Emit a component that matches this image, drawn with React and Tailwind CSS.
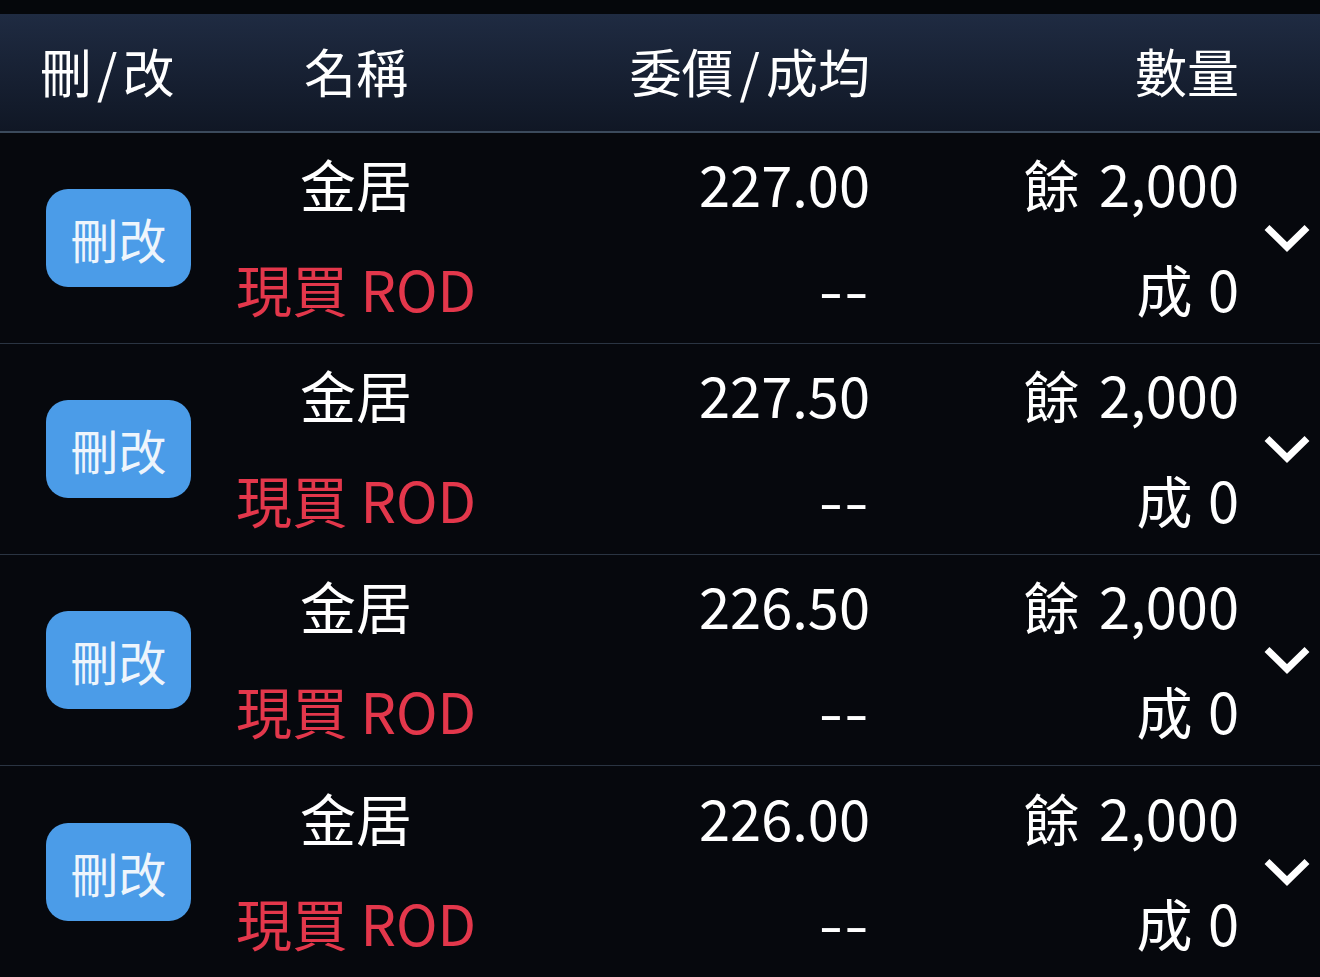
import React from "react";

const rows = [
  { price: "227.00" },
  { price: "227.50" },
  { price: "226.50" },
  { price: "226.00" },
];

function Chevron() {
  return (
    <svg width="48" height="30" viewBox="0 0 48 30" fill="none">
      <polyline points="4,4.5 24,24 44,4.5" stroke="#ffffff" strokeWidth="7" strokeLinecap="butt" strokeLinejoin="miter" />
    </svg>
  );
}

function Row({ price, last }) {
  return (
    <div className={`flex items-center h-[211px] ${last ? "" : "border-b border-[#2a3442]"}`}>
      <div className="w-[240px] pl-[46px] flex items-center">
        <div className="w-[145px] h-[98px] rounded-[22px] bg-[#4b9ce8] flex items-center justify-center text-[48px] text-[#eef5fc] leading-none">
          刪改
        </div>
      </div>
      <div className="w-[232px] pb-[6px] flex flex-col items-center leading-[105px] text-[56px]">
        <div className="text-white">金居</div>
        <div className="text-[#e3374b] whitespace-nowrap">現買 ROD</div>
      </div>
      <div className="w-[398px] pb-[6px] flex flex-col items-end leading-[105px] text-[56px] text-white">
        <div>{price}</div>
        <div className="inline-block origin-right scale-x-125 tracking-[1px]">--</div>
      </div>
      <div className="w-[369px] pb-[6px] flex flex-col items-end leading-[105px] text-[56px] text-white">
        <div className="whitespace-nowrap [word-spacing:7px]">餘 2,000</div>
        <div className="whitespace-nowrap [word-spacing:3px]">成 0</div>
      </div>
      <div className="flex-1 pl-[24px] flex items-center">
        <Chevron />
      </div>
    </div>
  );
}

export default function App() {
  return (
    <div className="w-[1320px] h-[977px] overflow-hidden bg-[#06080d] font-['Noto_Sans_CJK_TC','Noto_Sans_CJK_SC',sans-serif]">
      <div className="h-[14px] bg-[#05070b]" />
      <div className="h-[119px] pb-[4px] flex items-center bg-gradient-to-b from-[#1f2b42] to-[#101725] border-b-2 border-[#3b4a5c] text-white text-[52px] leading-none">
        <div className="w-[240px] pl-[40px] whitespace-nowrap">
          刪<span className="mx-[5px]">/</span>改
        </div>
        <div className="w-[232px] text-center">名稱</div>
        <div className="w-[398px] text-right whitespace-nowrap">
          委價<span className="mx-[6px]">/</span>成均
        </div>
        <div className="w-[369px] text-right">數量</div>
      </div>
      {rows.map((r, i) => (
        <Row key={i} price={r.price} last={i === rows.length - 1} />
      ))}
    </div>
  );
}
